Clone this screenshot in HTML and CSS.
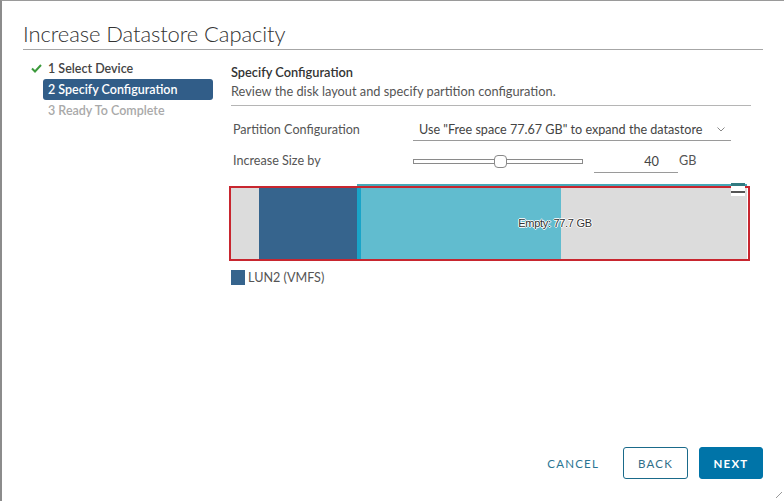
FILE: index.html
```html
<!DOCTYPE html>
<html>
<head>
<meta charset="utf-8">
<link rel="stylesheet" href="styles.css">
</head>
<body>
<div class="dialog">
  <h1 class="title">Increase Datastore Capacity</h1>
  <div class="main">
    <nav class="steps">
      <div class="step done"><svg class="check" width="11" height="9" viewBox="0 0 11 9"><path d="M1 4.5 L4 7.5 L10 1" fill="none" stroke="#3c9a3c" stroke-width="2"/></svg>1 Select Device</div>
      <div class="step active">2 Specify Configuration</div>
      <div class="step todo">3 Ready To Complete</div>
    </nav>
    <section class="content">
      <div class="sec-title">Specify Configuration</div>
      <div class="sec-desc">Review the disk layout and specify partition configuration.</div>
      <div class="form">
        <div class="row">
          <label class="lbl">Partition Configuration</label>
          <div class="select">Use "Free space 77.67 GB" to expand the datastore<svg class="chev" width="8" height="5" viewBox="0 0 8 5"><path d="M0.5 0.5 L4 4 L7.5 0.5" fill="none" stroke="#888" stroke-width="1"/></svg></div>
        </div>
        <div class="row">
          <label class="lbl">Increase Size by</label>
          <div class="slider"><div class="track"></div><div class="thumb"></div></div>
          <div class="num">40</div>
          <span class="unit">GB</span>
        </div>
      </div>
      <div class="disk">
        <div class="bar">
          <div class="seg gap1"></div>
          <div class="seg lun"></div>
          <div class="seg sel">
            <div class="stripe"></div>
            <div class="used"></div>
            <div class="free"></div>
            <span class="empty-label">Empty: 77.7 GB</span>
          </div>
        </div>
        <div class="mark"></div>
        <div class="handle"></div>
      </div>
      <div class="legend"><span class="swatch"></span>LUN2 (VMFS)</div>
    </section>
  </div>
  <footer class="footer">
    <button class="btn link">CANCEL</button>
    <button class="btn outline">BACK</button>
    <button class="btn primary">NEXT</button>
  </footer>
  <div class="grip"></div>
</div>
</body>
</html>
```
FILE: styles.css
```css
html, body { margin: 0; padding: 0; background: #fff; }
body { font-family: "Lato", "Noto Sans", sans-serif; color: #333; }
.dialog {
  position: relative;
  width: 784px; height: 501px; box-sizing: border-box;
  border-left: 2px solid #8c8c8c; border-top: 1px solid #9a9a9a;
  padding: 0 21px 0 21px;
  display: flex; flex-direction: column;
}
.title {
  margin: 19px 0 0 0;
  width: 740px;
  font-size: 22px; font-weight: 300; line-height: 28px;
  color: #333;
  border-bottom: 1px solid #a6a6a6;
  padding-bottom: 1px;
  letter-spacing: -0.1px;
}
.main { display: flex; padding-top: 8px; flex: 1; }
.steps { width: 190px; padding-left: 20px; box-sizing: border-box; display: flex; flex-direction: column; }
.step { height: 21px; line-height: 21px; font-size: 12.5px; padding-left: 5px; border-radius: 3px; display: flex; align-items: center; font-weight: 600; }
.step.done { color: #444; }
.check { margin-left: -17px; margin-right: 6px; }
.step.active { background: #315d88; color: #fff; }
.step.todo { color: #a9a9a9; }
.content { margin-left: 18px; width: 520px; display: flex; flex-direction: column; }
.sec-title { font-size: 12.8px; font-weight: 600; color: #333; margin-top: 5px; line-height: 18px; }
.sec-desc { font-size: 12.8px; color: #555; line-height: 18px; padding-top: 1px; padding-bottom: 5px; border-bottom: 1px solid #b5b5b5; }
.form { padding-left: 2px; padding-top: 8px; }
.row { display: flex; align-items: center; height: 31px; font-size: 12.6px; color: #555; }
.lbl { width: 180px; }
.select { width: 318px; box-sizing: border-box; padding: 0 6px; height: 22px; border-bottom: 1px solid #9a9a9a; display: flex; align-items: center; justify-content: space-between; color: #444; font-size: 12.6px; }
.chev { margin-left: 6px; }
.slider { position: relative; width: 170px; height: 14px; margin-right: 11px; }
.track { position: absolute; left: 0; right: 0; top: 5px; height: 3px; border: 1px solid #8a8a8a; background: #fff; }
.thumb { position: absolute; left: 81px; top: 1px; width: 11px; height: 11px; border: 1px solid #888; border-radius: 4px; background: #fff; }
.num { width: 84px; box-sizing: border-box; text-align: right; padding-right: 19px; height: 22px; line-height: 20px; border-bottom: 1px solid #9a9a9a; color: #444; font-size: 12.8px; margin-top: 2px; }
.unit { margin-left: 1px; color: #555; }
.disk { position: relative; margin-top: 10px; height: 78px; }
.bar { position: absolute; left: 0; top: 2px; width: 516px; height: 72px; display: flex; }
.seg { height: 100%; }
.gap1 { width: 28px; background: #dcdcdc; }
.lun { width: 98px; background: #36648d; }
.sel { position: relative; flex: 1; display: flex; box-shadow: 0 -4px 0 #46a9b8; }
.stripe { width: 4px; background: #1aa4c8; }
.used { width: 200px; background: #61bccf; }
.free { flex: 1; background: #dcdcdc; }
.empty-label {
  position: absolute; left: 0; right: 0; top: 0; bottom: 0;
  display: flex; align-items: center; justify-content: center;
  font-family: "Liberation Sans", Arial, sans-serif; font-size: 11px; color: #333;
  letter-spacing: -0.3px; padding-left: 6px; padding-bottom: 2px;
  text-shadow: -1px 0 #fff, 1px 0 #fff, 0 -1px #fff, 0 1px #fff;
}
.mark { position: absolute; left: -2px; top: 0; width: 517px; height: 71px; border: 2px solid #c8262f; }
.handle { position: absolute; left: 500px; top: -3px; width: 14px; height: 13px; background: #fff; border-top: 3px solid #327a80; box-sizing: border-box; }
.handle::after { content: ""; position: absolute; left: 0; right: 0; top: 5px; height: 2px; background: #555; }
.legend { display: flex; align-items: center; margin-top: 6px; font-size: 12.6px; color: #555; }
.swatch { width: 14px; height: 15px; background: #36648d; margin-right: 3px; }
.footer { display: flex; justify-content: flex-end; align-items: center; gap: 11px; padding-right: 0; width: 740px; margin-bottom: 22px; }
.btn { font-family: "Lato", "Noto Sans", sans-serif; height: 32px; font-size: 11.5px; letter-spacing: 1.2px; border-radius: 3px; cursor: pointer; background: transparent; border: 1px solid transparent; }
.btn.link { color: #2a7593; padding: 0 12px; margin-right: 0; }
.btn.outline { width: 65px; border-color: #1a6a8a; color: #2f6e89; }
.btn.primary { width: 64px; background: #0074a8; border-color: #0074a8; color: #fff; font-weight: 700; }
.grip { position: absolute; right: 2px; bottom: 3px; width: 6px; height: 6px; background: linear-gradient(135deg, transparent 45%, #999 45%, #999 55%, transparent 55%); }
```
